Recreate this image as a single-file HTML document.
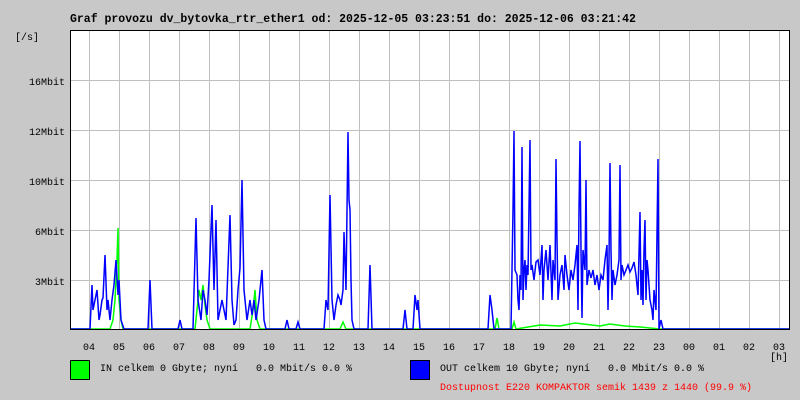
<!DOCTYPE html>
<html><head><meta charset="utf-8"><style>
html,body{margin:0;padding:0;background:#c8c8c8;width:800px;height:400px;overflow:hidden}
svg{display:block}
text{font-family:"Liberation Mono","DejaVu Sans Mono",monospace;font-size:10px;fill:#000}
</style></head><body>
<svg width="800" height="400" xmlns="http://www.w3.org/2000/svg">
<rect x="0" y="0" width="800" height="400" fill="#c8c8c8"/>
<text x="70" y="22" style="font-size:11.5px;font-weight:bold">Graf provozu dv_bytovka_rtr_ether1 od: 2025-12-05 03:23:51 do: 2025-12-06 03:21:42</text>
<text x="15" y="40">[/s]</text>
<rect x="70" y="30" width="720" height="300" fill="#fff"/>
<g stroke="#c0c0c0" stroke-width="1">
<path d="M70.5 80.5H790M70.5 130.5H790M70.5 180.5H790M70.5 230.5H790M70.5 280.5H790"/>
<path d="M89.5 30V330M119.5 30V330M149.5 30V330M179.5 30V330M209.5 30V330M239.5 30V330M269.5 30V330M299.5 30V330M329.5 30V330M359.5 30V330M389.5 30V330M419.5 30V330M449.5 30V330M479.5 30V330M509.5 30V330M539.5 30V330M569.5 30V330M599.5 30V330M629.5 30V330M659.5 30V330M689.5 30V330M719.5 30V330M749.5 30V330M779.5 30V330"/>
</g>
<g text-anchor="end">
<text x="65" y="85">16Mbit</text><text x="65" y="135">12Mbit</text><text x="65" y="185">10Mbit</text><text x="65" y="235">6Mbit</text><text x="65" y="285">3Mbit</text>
</g>
<polyline fill="none" stroke="#00ff00" stroke-width="1.5" points="70,329 110,329 113,320 115,300 117,260 118,228 119,300 121,320 123,329 195,329 197,310 199,290 201,300 203,285 205,305 207,320 210,329 250,329 253,310 255,290 257,320 260,329 340,329 343,322 346,329 495,329 497,318 499,329 512,329 514,322 516,329 540,325 560,326 575,323 600,326 610,324 625,326 640,327 660,329 790,329"/>
<polyline fill="none" stroke="#0000ff" stroke-width="1.5" points="70,329 90,329 92,285 93,310 95,300 97,290 99,320 100,315 102,300 103,298 105,255 107,310 108,300 110,320 112,300 114,285 116,260 118,295 119,280 121,320 124,329 148,329 150,280 152,329 178,329 180,320 182,329 193,329 196,218 198,300 201,320 203,290 205,300 207,315 209,280 212,205 214,290 216,220 218,320 222,300 226,320 230,215 232,300 234,325 236,320 238,290 240,268 242,180 244,290 247,320 250,300 252,315 254,300 256,320 259,300 262,270 264,320 266,329 285,329 287,320 289,329 296,329 298,322 300,329 324,329 326,300 328,310 330,195 332,300 334,320 336,305 338,295 340,300 341,305 343,290 344,232 346,290 348,132 349,200 350,210 351,280 352,320 354,329 368,329 370,265 372,329 403,329 405,310 407,329 413,329 415,295 417,310 418,300 420,329 488,329 490,295 492,310 494,329 511,329 512,270 513,210 514,131 515,270 517,275 518,300 519,310 520,275 521,290 522,147 523,300 524,270 525,260 526,290 527,265 528,275 530,140 531,270 532,265 534,280 536,262 538,260 540,275 542,245 543,300 544,270 546,250 548,280 550,245 552,300 553,260 555,280 556,159 557,240 558,300 560,275 562,265 564,290 565,255 567,275 569,290 571,270 573,280 575,265 577,245 578,310 579,210 580,141 581,250 582,318 583,250 585,270 586,180 587,285 589,270 591,278 593,270 595,285 597,275 599,290 601,275 603,280 605,260 607,245 608,310 609,260 610,163 611,250 612,300 613,270 615,285 617,275 619,260 620,165 621,280 622,265 624,275 626,270 628,265 630,272 632,268 634,262 636,275 638,295 640,212 641,300 642,270 643,305 644,250 645,220 646,300 647,260 648,270 650,300 652,310 653,320 654,290 656,310 658,159 659,329 661,320 663,329 790,329"/>
<rect x="70.5" y="30.5" width="719" height="299" fill="none" stroke="#000" stroke-width="1"/>
<g text-anchor="middle">
<text x="89" y="350">04</text><text x="119" y="350">05</text><text x="149" y="350">06</text><text x="179" y="350">07</text><text x="209" y="350">08</text><text x="239" y="350">09</text><text x="269" y="350">10</text><text x="299" y="350">11</text><text x="329" y="350">12</text><text x="359" y="350">13</text><text x="389" y="350">14</text><text x="419" y="350">15</text><text x="449" y="350">16</text><text x="479" y="350">17</text><text x="509" y="350">18</text><text x="539" y="350">19</text><text x="569" y="350">20</text><text x="599" y="350">21</text><text x="629" y="350">22</text><text x="659" y="350">23</text><text x="689" y="350">00</text><text x="719" y="350">01</text><text x="749" y="350">02</text><text x="779" y="350">03</text>
</g>
<text x="770" y="360">[h]</text>
<rect x="70.5" y="360.5" width="19" height="19" fill="#00ff00" stroke="#000"/>
<text x="100" y="371" xml:space="preserve">IN celkem 0 Gbyte; nyní   0.0 Mbit/s 0.0 %</text>
<rect x="410.5" y="360.5" width="19" height="19" fill="#0000ff" stroke="#000"/>
<text x="440" y="371" xml:space="preserve">OUT celkem 10 Gbyte; nyní   0.0 Mbit/s 0.0 %</text>
<text x="440" y="390" style="fill:#ff0000">Dostupnost E220 KOMPAKTOR semik 1439 z 1440 (99.9 %)</text>
</svg>
</body></html>
